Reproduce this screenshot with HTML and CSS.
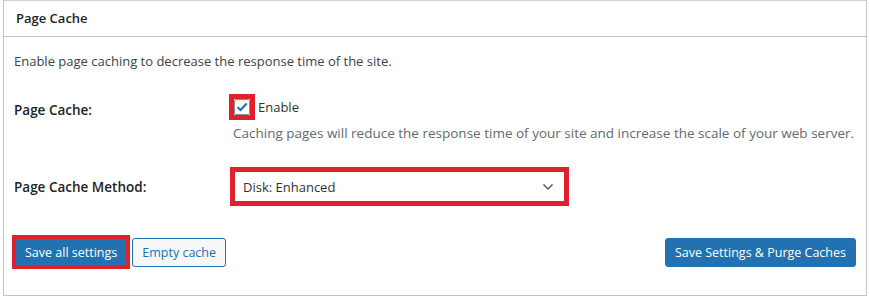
FILE: index.html
```html
<!DOCTYPE html>
<html lang="en">
<head>
  <meta charset="UTF-8" />
  <title>Page Cache</title>
  <link rel="stylesheet" href="styles.css">
</head>
<body>
  <div class="postbox">
    <h3 class="hndle">Page Cache</h3>
    <div class="inside">
      <p class="intro">Enable page caching to decrease the response time of the site.</p>

      <div class="form-table">
        <div class="row row-check">
          <div class="label">Page Cache:</div>
          <div class="field">
            <label class="check-line">
              <span class="mark mark-check">
                <span class="checkbox">
                  <svg width="12" height="10" viewBox="0 0 12 10"><path d="M1.5 5.2 L4.6 8 L10.6 1.6" fill="none" stroke="#2271b1" stroke-width="2.2"/></svg>
                </span>
              </span>
              Enable
            </label>
            <p class="desc">Caching pages will reduce the response time of your site and increase the scale of your web server.</p>
          </div>
        </div>

        <div class="row row-select">
          <div class="label">Page Cache Method:</div>
          <div class="field">
            <div class="mark mark-select">
              <div class="select">
                <span>Disk: Enhanced</span>
                <svg width="12" height="8" viewBox="0 0 12 8"><path d="M1.5 1.5 L6 6 L10.5 1.5" fill="none" stroke="#50575e" stroke-width="1.5"/></svg>
              </div>
            </div>
          </div>
        </div>
      </div>

      <div class="actions">
        <div class="left-actions">
          <span class="mark mark-btn"><button class="button button-primary">Save all settings</button></span>
          <button class="button">Empty cache</button>
        </div>
        <button class="button button-primary">Save Settings &amp; Purge Caches</button>
      </div>
    </div>
  </div>
</body>
</html>
```

FILE: styles.css
```css
body {
  margin: 0;
  font-family: "Open Sans", "Noto Sans", sans-serif;
  font-size: 13px;
  color: #1d2327;
  background: #fff;
}

.postbox {
  margin: 0 2px 0 3px;
  height: 296px;
  border: 1px solid #c3c4c7;
  border-top-color: #cfd0d2;
  box-sizing: border-box;
}

.hndle {
  margin: 0;
  height: 36px;
  padding: 0 12px;
  line-height: 35px;
  font-size: 13px;
  font-weight: 600;
  border-bottom: 1px solid #c3c4c7;
  box-sizing: border-box;
}

.inside {
  padding: 0 10px;
}

.intro {
  margin: 14px 0 0;
  line-height: 20px;
  color: #3c434a;
}

.form-table {
  margin-top: 23px;
}

.row {
  display: flex;
}

.label {
  width: 215px;
  flex: none;
  font-size: 13.5px;
  font-weight: 600;
  color: #1d2327;
}

.row-check .label {
  line-height: 26px;
  padding-top: 3px;
}

.check-line {
  display: flex;
  align-items: center;
  gap: 3px;
  line-height: 26px;
  color: #2c3338;
}

.mark {
  display: inline-block;
  border: 5px solid #e0202b;
}

.mark-check {
  display: flex;
}

.checkbox {
  display: flex;
  align-items: center;
  justify-content: center;
  width: 16px;
  height: 16px;
  box-sizing: border-box;
  border: 1px solid #8c8f94;
  background: #fff;
  border-radius: 2px;
}

.desc {
  margin: 3px 0 0 4px;
  line-height: 20px;
  font-size: 13.5px;
  color: #646970;
}

.row-select {
  margin-top: 24px;
  align-items: center;
}

.row-select .field {
  margin-left: 1px;
}

.select {
  display: flex;
  align-items: center;
  justify-content: space-between;
  width: 329px;
  height: 29px;
  padding: 0 10px 0 8px;
  box-sizing: border-box;
  background: #fff;
  color: #2c3338;
}

.actions {
  display: flex;
  justify-content: space-between;
  align-items: center;
  margin-top: 29px;
}

.left-actions {
  display: flex;
  align-items: center;
  gap: 2px;
  margin-left: -2px;
}

.mark-btn {
  border-width: 4px;
  line-height: 0;
}

.button {
  font-family: inherit;
  font-size: 12.5px;
  height: 29px;
  padding: 0 9px;
  border: 1px solid #2271b1;
  border-radius: 3px;
  background: #f6f7f7;
  color: #2271b1;
  cursor: pointer;
}

.button-primary {
  background: #2271b1;
  color: #fff;
}

.mark-btn .button {
  height: 26px;
  border-radius: 0;
  padding: 0 8px;
}
```
